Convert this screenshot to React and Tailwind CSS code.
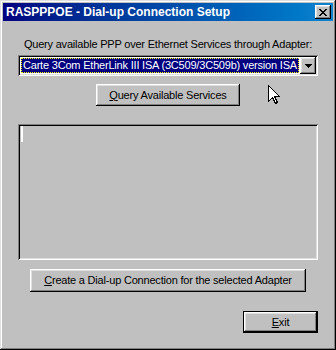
import React from "react";

const raised =
  "shadow-[inset_-1px_-1px_#000,inset_1px_1px_#fff,inset_-2px_-2px_#808080,inset_2px_2px_#dfdfdf]";
const sunken =
  "shadow-[inset_1px_1px_#808080,inset_-1px_-1px_#fff,inset_2px_2px_#000,inset_-2px_-2px_#dfdfdf]";

function Btn({ children, className = "" }) {
  return (
    <div
      className={`flex items-center justify-center bg-[#c0c0c0] text-black whitespace-nowrap ${raised} ${className}`}
    >
      {children}
    </div>
  );
}

export default function App() {
  return (
    <div
      className="relative w-[336px] h-[350px] bg-[#c0c0c0] p-[3px] shadow-[inset_-1px_-1px_#000,inset_1px_1px_#dfdfdf,inset_-2px_-2px_#808080,inset_2px_2px_#fff] text-[11px] leading-[13px] tracking-[-0.2px] text-black"
      style={{ fontFamily: '"Liberation Sans", Arial, sans-serif' }}
    >
      {/* title bar */}
      <div className="h-[18px] flex items-center justify-between pl-[3px] pr-[2px] bg-gradient-to-r from-[#000080] to-[#1084d0]">
        <span className="text-white font-bold text-[12px] leading-[14px] tracking-normal">
          RASPPPOE - Dial-up Connection Setup
        </span>
        <div className={`w-[16px] h-[14px] flex items-center justify-center bg-[#c0c0c0] ${raised}`}>
          <svg width="8" height="7" viewBox="0 0 8 7" shapeRendering="crispEdges">
            <path
              d="M0 0h2v1H0zM6 0h2v1H6zM1 1h2v1H1zM5 1h2v1H5zM2 2h4v1H2zM3 3h2v1H3zM2 4h4v1H2zM1 5h2v1H1zM5 5h2v1H5zM0 6h2v1H0zM6 6h2v1H6z"
              fill="#000"
            />
          </svg>
        </div>
      </div>

      <div className="flex flex-col px-[15px]">
        <div className="mt-[17px] text-center whitespace-nowrap">
          Query available PPP over Ethernet Services through Adapter:
        </div>

        {/* combo */}
        <div className={`mt-[4px] h-[21px] bg-white flex items-stretch p-[3px] ${sunken}`}>
          <div className="flex-1 min-w-0 bg-[#000080] border border-dotted border-[#ffff00] text-white whitespace-nowrap overflow-hidden pl-[1px] leading-[13px]">
            Carte 3Com EtherLink III ISA (3C509/3C509b) version ISA
          </div>
          <div className={`ml-[1px] -mr-[1px] -my-[1px] w-[16px] flex items-center justify-center bg-[#c0c0c0] ${raised}`}>
            <svg width="7" height="4" viewBox="0 0 7 4" shapeRendering="crispEdges">
              <path d="M0 0h7v1H0zM1 1h5v1H1zM2 2h3v1H2zM3 3h1v1H3z" fill="#000" />
            </svg>
          </div>
        </div>

        <Btn className="mt-[8px] self-center w-[144px] h-[22px]">
          <span>
            <span className="underline">Q</span>uery Available Services
          </span>
        </Btn>

        {/* list */}
        <div className={`mt-[18px] h-[136px] bg-[#c0c0c0] pt-[2px] pl-[3px] ${sunken}`}>
          <div className="w-[2px] h-[16px] bg-white" />
        </div>

        <Btn className="mt-[9px] self-center w-[276px] h-[23px]">
          <span>
            <span className="underline">C</span>reate a Dial-up Connection for the selected Adapter
          </span>
        </Btn>

        <div className="mt-[19px] self-end w-[75px] h-[22px] border border-black">
          <Btn className="w-full h-full">
            <span>
              <span className="underline">E</span>xit
            </span>
          </Btn>
        </div>
      </div>

      {/* mouse pointer */}
      <svg
        className="absolute left-[268px] top-[85px]"
        width="13"
        height="20"
        viewBox="0 0 13 20"
        shapeRendering="crispEdges"
      >
        <path
          d="M0.5 0.5 L0.5 16.5 L4.5 12.5 L7.5 18.5 L9.5 17.5 L6.5 11.5 L11.5 11.5 Z"
          fill="#fff"
          stroke="#000"
        />
      </svg>
    </div>
  );
}
